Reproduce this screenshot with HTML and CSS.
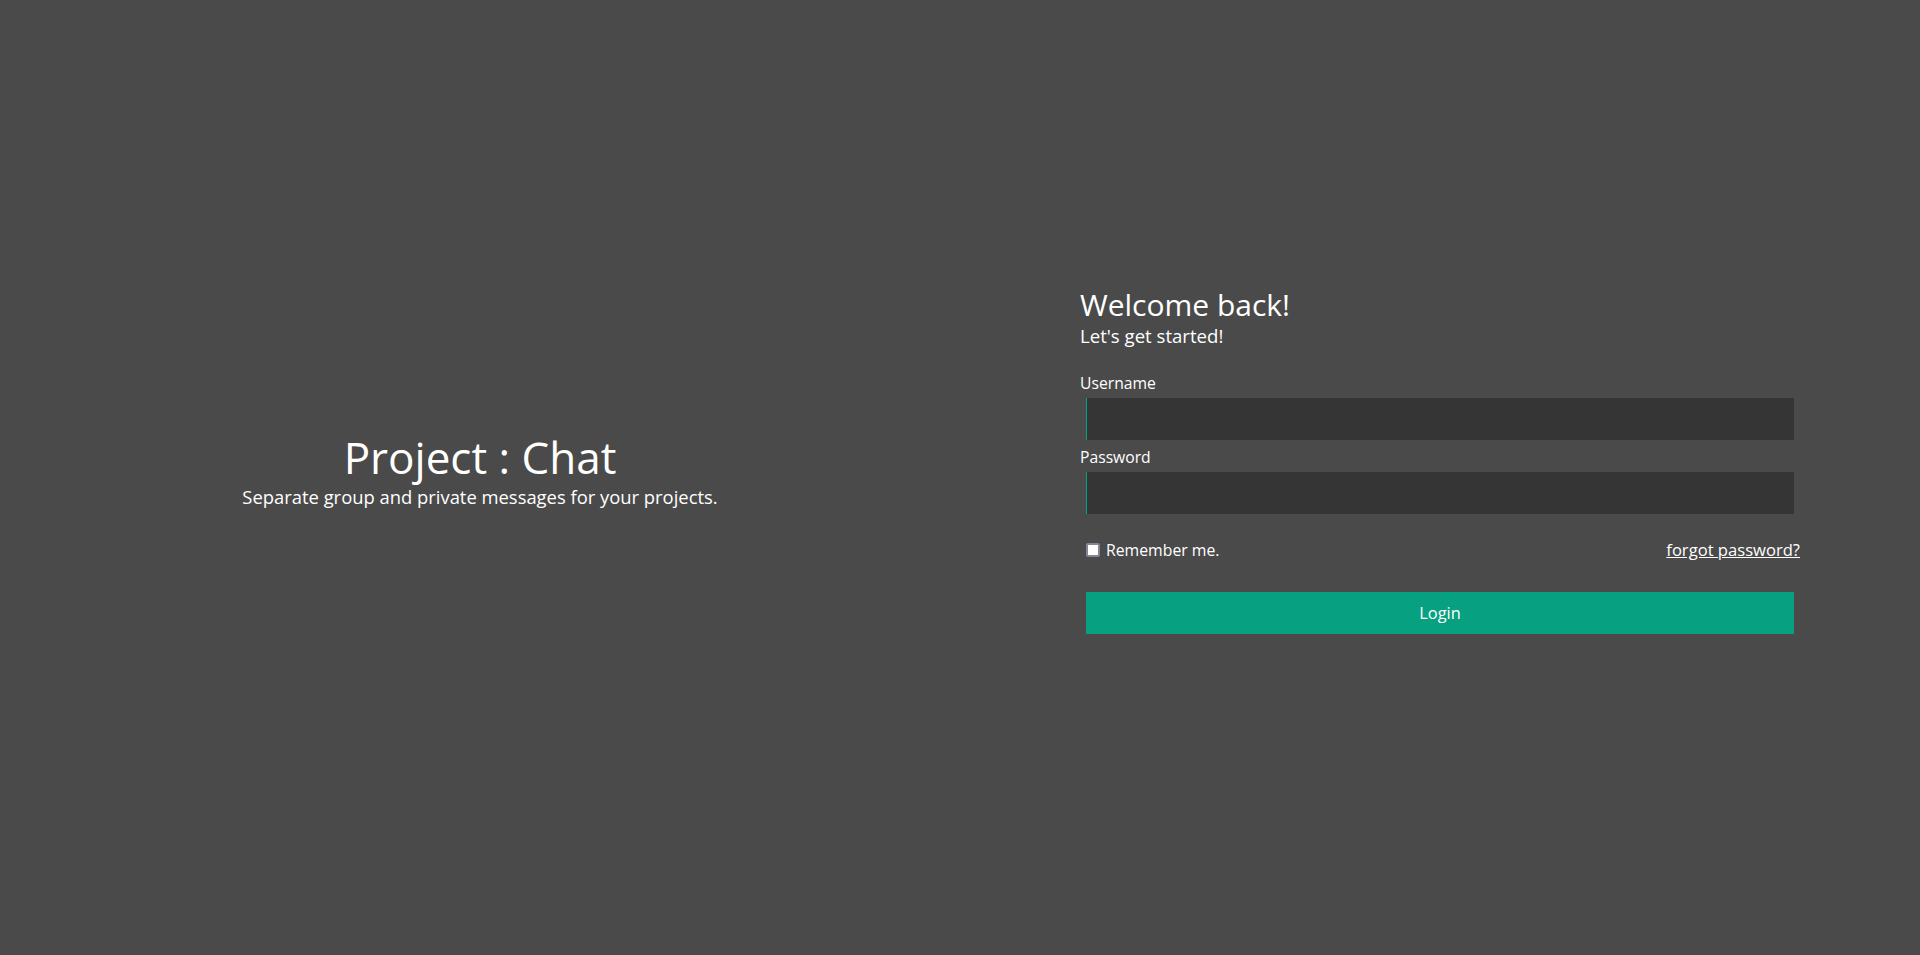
FILE: index.html
```html
<!DOCTYPE html>
<html lang="en">
<head>
<meta charset="utf-8">
<title>Project : Chat</title>
<link rel="stylesheet" href="styles.css">
</head>
<body>
<main class="page">
  <section class="intro">
    <h1 class="intro-title">Project : Chat</h1>
    <p class="intro-sub">Separate group and private messages for your projects.</p>
  </section>
  <section class="auth">
    <form class="login">
      <h2 class="login-title">Welcome back!</h2>
      <p class="login-sub">Let's get started!</p>
      <label class="field-label" for="username">Username</label>
      <input class="field-input" id="username" type="text">
      <label class="field-label" for="password">Password</label>
      <input class="field-input" id="password" type="password">
      <div class="options">
        <label class="remember"><input class="check" type="checkbox"><span>Remember me.</span></label>
        <a class="forgot" href="#">forgot password?</a>
      </div>
      <button class="login-btn" type="button">Login</button>
    </form>
  </section>
</main>
</body>
</html>
```
FILE: styles.css
```css
html, body {
  margin: 0;
  padding: 0;
}

body {
  background: #4a4a4a;
  color: #ffffff;
  font-family: "Open Sans", "Noto Sans", "Liberation Sans", sans-serif;
}

.page {
  display: grid;
  grid-template-columns: 1fr 1fr;
  align-items: center;
  height: 100vh;
  min-height: 955px;
}

.intro {
  text-align: center;
  padding-bottom: 15px;
}

.intro-title {
  margin: 0;
  font-size: 44px;
  font-weight: 400;
  line-height: 50px;
}

.intro-sub {
  margin: 3px 0 0;
  font-size: 18.4px;
  line-height: 24px;
}

.auth {
  padding: 0 120px;
}

.login {
  display: flex;
  flex-direction: column;
  padding-bottom: 35px;
}

.login-title {
  margin: 0;
  font-size: 30px;
  font-weight: 400;
  line-height: 36px;
}

.login-sub {
  margin: 1px 0 0;
  font-size: 18.6px;
  line-height: 24px;
}

.field-label {
  font-size: 15.7px;
  line-height: 20px;
  margin-top: 25px;
}

.field-label + .field-input {
  margin-top: 5px;
}

.field-input + .field-label {
  margin-top: 7px;
}

.field-input {
  box-sizing: border-box;
  height: 42px;
  margin: 0 6px;
  padding: 0 10px;
  background: #353535;
  border: none;
  border-left: 1px solid #07a080;
  color: #ffffff;
  font: inherit;
  font-size: 16px;
  outline: none;
}

.options {
  display: flex;
  justify-content: space-between;
  align-items: center;
  margin-top: 26px;
  padding-left: 6px;
  font-size: 15.8px;
  line-height: 20px;
}

.remember {
  display: flex;
  align-items: center;
  gap: 6px;
}

.check {
  appearance: none;
  -webkit-appearance: none;
  box-sizing: border-box;
  width: 14px;
  height: 14px;
  margin: 0;
  background: #ffffff;
  border: 2px solid #84849a;
  border-radius: 2px;
}

.forgot {
  color: #ffffff;
  font-size: 16.6px;
  text-decoration: underline;
}

.login-btn {
  box-sizing: border-box;
  height: 42px;
  margin: 32px 6px 0;
  background: #07a080;
  border: none;
  color: #ffffff;
  font: inherit;
  font-size: 16.4px;
  cursor: pointer;
}
```
